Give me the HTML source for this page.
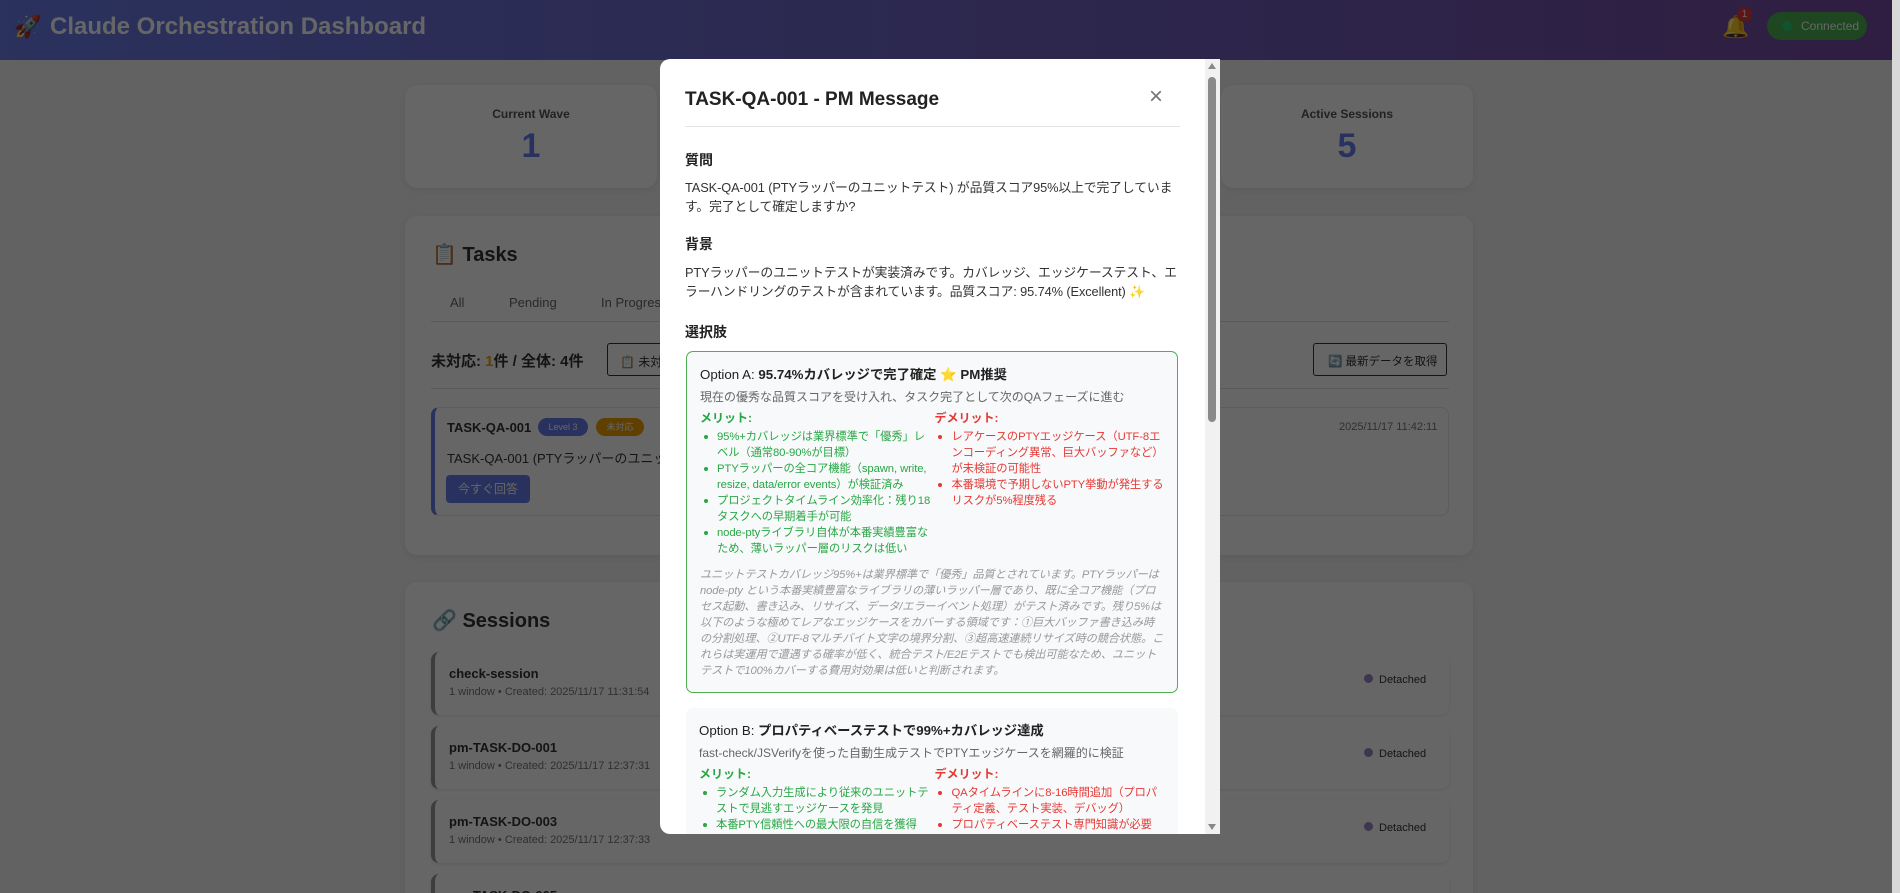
<!DOCTYPE html>
<html style="overflow:hidden;width:1900px;height:893px"><head><meta charset="utf-8">
<style>
*{box-sizing:border-box;margin:0;padding:0}
body{width:1900px;height:893px;overflow:hidden;background:#f5f5f7;font-family:"Liberation Sans","Noto Sans CJK JP",sans-serif;color:#333;position:relative}
#wrap{position:absolute;left:0;top:0;width:1900px;height:893px;overflow:hidden}
.hdr{position:absolute;left:0;top:0;width:1900px;height:60px;background:linear-gradient(90deg,#6a7de8,#764ba2)}
.hdr h1{position:absolute;left:50px;top:13px;font-size:24px;color:#fff;font-weight:bold}
.hdr .rk{position:absolute;left:14px;top:14px;font-size:22px}
.bell{position:absolute;left:1722px;top:14px;font-size:22px;color:#f5b400}
.bdg{position:absolute;left:1737px;top:7px;width:15px;height:15px;border-radius:50%;background:#e53935;color:#fff;font-size:10px;text-align:center;line-height:15px}
.conn{position:absolute;left:1767px;top:12px;width:100px;height:28px;border-radius:14px;background:#4caf50;color:#fff;font-size:12px;line-height:28px;padding-left:34px}
.conn:before{content:"";position:absolute;left:15px;top:9px;width:10px;height:10px;border-radius:50%;background:#2bd07a}
.card{position:absolute;background:#fff;border-radius:12px;box-shadow:0 2px 8px rgba(0,0,0,.08)}
.st{width:252px;height:103px;top:85px;text-align:center}
.st .l{margin-top:22px;font-size:12px;color:#555;font-weight:bold}
.st .v{margin-top:6px;font-size:34px;color:#667eea;font-weight:bold}
.abs{position:absolute;white-space:nowrap}
.tab{font-size:13px;color:#666}
.item{position:absolute;left:431px;width:1018px;background:#fff;border:1px solid #e6e6e6;border-left:4px solid #667eea;border-radius:8px}
.sess{position:absolute;left:431px;width:1018px;height:63px;background:#fff;border-left:4px solid #999;border-radius:8px;box-shadow:0 1px 3px rgba(0,0,0,.1)}
.sess b{position:absolute;left:14px;top:14px;font-size:13px}
.sess span{position:absolute;left:14px;top:34px;font-size:11px;color:#777}
.sess i{position:absolute;left:929px;top:22px;font-size:11px;font-style:normal;color:#333}
.sess i:before{content:"";display:inline-block;width:9px;height:9px;border-radius:50%;background:#9c88c8;margin-right:6px}
.ov{position:absolute;left:0;top:0;width:1900px;height:893px;background:rgba(0,0,0,.6)}
.pscroll{position:absolute;right:0;top:0;width:8px;height:893px;background:#d8d8d8}
.modal{position:absolute;left:660px;top:59px;width:560px;height:775px;background:#fff;border-radius:10px 0 0 10px;overflow:hidden}
.in{position:absolute;left:25px;top:0;width:495px}
.mt{position:absolute;top:30px;left:0;font-size:19px;font-weight:bold;color:#222}
.x{position:absolute;left:464px;top:24px;font-size:24px;color:#777}
.hr{position:absolute;top:67px;left:0;width:495px;height:1px;background:#e5e5e5}
.h{position:absolute;left:0;font-size:14px;font-weight:bold;color:#222}
.p{position:absolute;left:0;width:495px;font-size:12.8px;line-height:18.5px;color:#333;letter-spacing:-0.1px}
.opt{position:absolute;left:1px;width:492px;background:#f8f9fa;border-radius:7px;padding:12px 13px;overflow:hidden}
.optA{border:1px solid #4caf50}
.ot{font-size:13.3px;font-weight:bold;color:#222;line-height:18px;margin-top:2px}
.ot span{font-weight:normal}
.od{font-size:12px;color:#666;margin-top:5px;line-height:16px}
.cols{display:flex;margin-top:5px}
.c1{width:237px}.c2{width:232px}
.ch{font-size:12px;font-weight:bold;line-height:16px}
.g{color:#28a745}.r{color:#e53935}
ul{list-style:none;margin-top:3px}
li{position:relative;padding-left:17px;font-size:11.3px;line-height:16px;letter-spacing:-0.1px}
li:before{content:"";position:absolute;left:4px;top:6px;width:4px;height:4px;border-radius:50%;background:currentColor}
.note{font-size:11.2px;line-height:16px;color:#999;font-style:italic;margin-top:10px;letter-spacing:-0.1px}
.msb{position:absolute;left:1205px;top:59px;width:15px;height:775px;background:#f1f1f1}
.thumb{position:absolute;left:3px;top:18px;width:8px;height:345px;border-radius:4px;background:#8a8a8a}
</style></head><body><div id="wrap">
<div class="hdr"><span class="rk">🚀</span><h1>Claude Orchestration Dashboard</h1>
<span class="bell">🔔</span><span class="bdg">1</span><div class="conn">Connected</div></div>

<div class="card st" style="left:405px"><div class="l">Current Wave</div><div class="v">1</div></div>
<div class="card st" style="left:677px"><div class="l">Tasks</div><div class="v">4</div></div>
<div class="card st" style="left:949px"><div class="l">Sessions</div><div class="v">5</div></div>
<div class="card st" style="left:1221px"><div class="l">Active Sessions</div><div class="v">5</div></div>

<div class="card" style="left:405px;top:216px;width:1068px;height:339px"></div>
<div class="abs" style="left:432px;top:242px;font-size:20px;font-weight:bold">📋 Tasks</div>
<div class="abs tab" style="left:450px;top:295px">All</div>
<div class="abs tab" style="left:509px;top:295px">Pending</div>
<div class="abs tab" style="left:601px;top:295px">In Progress</div>
<div class="abs" style="left:431px;top:321px;width:1018px;height:1px;background:#e0e0e0"></div>
<div class="abs" style="left:431px;top:350px;font-size:15px;font-weight:bold">未対応: <span style="color:#f0a000">1</span>件 / 全体: 4件</div>
<div class="abs" style="left:607px;top:343px;width:120px;height:33px;border:1px solid #333;border-radius:3px;font-size:12px;padding:9px 12px">📋 未対応のみ</div>
<div class="abs" style="left:1313px;top:343px;width:134px;height:33px;border:1px solid #333;border-radius:3px;font-size:11.5px;padding:9px 14px">🔄 最新データを取得</div>
<div class="abs" style="left:431px;top:388px;width:1018px;height:1px;background:#e0e0e0"></div>
<div class="item" style="top:407px;height:109px"></div>
<div class="abs" style="left:447px;top:420px;font-size:13px;font-weight:bold">TASK-QA-001</div>
<div class="abs" style="left:538px;top:418px;width:50px;height:18px;border-radius:9px;background:#667eea;color:#fff;font-size:9px;text-align:center;line-height:18px">Level 3</div>
<div class="abs" style="left:596px;top:418px;width:48px;height:18px;border-radius:9px;background:#f0a000;color:#fff;font-size:9px;text-align:center;line-height:18px">未対応</div>
<div class="abs" style="left:1339px;top:421px;font-size:11px;color:#777">2025/11/17 11:42:11</div>
<div class="abs" style="left:447px;top:448px;font-size:13px">TASK-QA-001 (PTYラッパーのユニットテスト) が品質スコア95%以上で完了しています。</div>
<div class="abs" style="left:446px;top:475px;width:84px;height:28px;border-radius:4px;background:#667eea;color:#fff;font-size:12px;text-align:center;line-height:28px">今すぐ回答</div>

<div class="card" style="left:405px;top:582px;width:1068px;height:340px"></div>
<div class="abs" style="left:432px;top:608px;font-size:20px;font-weight:bold">🔗 Sessions</div>
<div class="sess" style="top:652px"><b>check-session</b><span>1 window • Created: 2025/11/17 11:31:54</span><i>Detached</i></div>
<div class="sess" style="top:726px"><b>pm-TASK-DO-001</b><span>1 window • Created: 2025/11/17 12:37:31</span><i>Detached</i></div>
<div class="sess" style="top:800px"><b>pm-TASK-DO-003</b><span>1 window • Created: 2025/11/17 12:37:33</span><i>Detached</i></div>
<div class="sess" style="top:874px"><b>pm-TASK-DO-005</b></div>

<div class="ov"></div>
<div class="pscroll"></div>

<div class="modal"><div class="in">
<div class="mt">TASK-QA-001 - PM Message</div>
<div class="x">×</div>
<div class="hr"></div>
<div class="h" style="top:91px">質問</div>
<div class="p" style="top:120px">TASK-QA-001 (PTYラッパーのユニットテスト) が品質スコア95%以上で完了しています。完了として確定しますか?</div>
<div class="h" style="top:175px">背景</div>
<div class="p" style="top:205px">PTYラッパーのユニットテストが実装済みです。カバレッジ、エッジケーステスト、エラーハンドリングのテストが含まれています。品質スコア: 95.74% (Excellent) ✨</div>
<div class="h" style="top:263px">選択肢</div>

<div class="opt optA" style="top:292px;height:342px">
<div class="ot"><span>Option A:</span> 95.74%カバレッジで完了確定 ⭐ PM推奨</div>
<div class="od">現在の優秀な品質スコアを受け入れ、タスク完了として次のQAフェーズに進む</div>
<div class="cols"><div class="c1 g"><div class="ch">メリット:</div><ul>
<li>95%+カバレッジは業界標準で「優秀」レベル（通常80-90%が目標）</li>
<li>PTYラッパーの全コア機能（spawn, write, resize, data/error events）が検証済み</li>
<li>プロジェクトタイムライン効率化：残り18タスクへの早期着手が可能</li>
<li>node-ptyライブラリ自体が本番実績豊富なため、薄いラッパー層のリスクは低い</li></ul></div>
<div class="c2 r"><div class="ch">デメリット:</div><ul>
<li>レアケースのPTYエッジケース（UTF-8エンコーディング異常、巨大バッファなど）が未検証の可能性</li>
<li>本番環境で予期しないPTY挙動が発生するリスクが5%程度残る</li></ul></div></div>
<div class="note">ユニットテストカバレッジ95%+は業界標準で「優秀」品質とされています。PTYラッパーはnode-pty という本番実績豊富なライブラリの薄いラッパー層であり、既に全コア機能（プロセス起動、書き込み、リサイズ、データ/エラーイベント処理）がテスト済みです。残り5%は以下のような極めてレアなエッジケースをカバーする領域です：①巨大バッファ書き込み時の分割処理、②UTF-8マルチバイト文字の境界分割、③超高速連続リサイズ時の競合状態。これらは実運用で遭遇する確率が低く、統合テスト/E2Eテストでも検出可能なため、ユニットテストで100%カバーする費用対効果は低いと判断されます。</div>
</div>

<div class="opt" style="top:649px;height:200px">
<div class="ot"><span>Option B:</span> プロパティベーステストで99%+カバレッジ達成</div>
<div class="od">fast-check/JSVerifyを使った自動生成テストでPTYエッジケースを網羅的に検証</div>
<div class="cols"><div class="c1 g"><div class="ch">メリット:</div><ul>
<li>ランダム入力生成により従来のユニットテストで見逃すエッジケースを発見</li>
<li>本番PTY信頼性への最大限の自信を獲得</li></ul></div>
<div class="c2 r"><div class="ch">デメリット:</div><ul>
<li>QAタイムラインに8-16時間追加（プロパティ定義、テスト実装、デバッグ）</li>
<li>プロパティベーステスト専門知識が必要</li></ul></div></div>
</div>
</div></div>
<div class="msb"><div class="thumb"></div>
<div style="position:absolute;left:3px;top:4px;border-left:4px solid transparent;border-right:4px solid transparent;border-bottom:6px solid #888"></div>
<div style="position:absolute;left:3px;bottom:4px;border-left:4px solid transparent;border-right:4px solid transparent;border-top:6px solid #888"></div></div>
</div></body></html>
